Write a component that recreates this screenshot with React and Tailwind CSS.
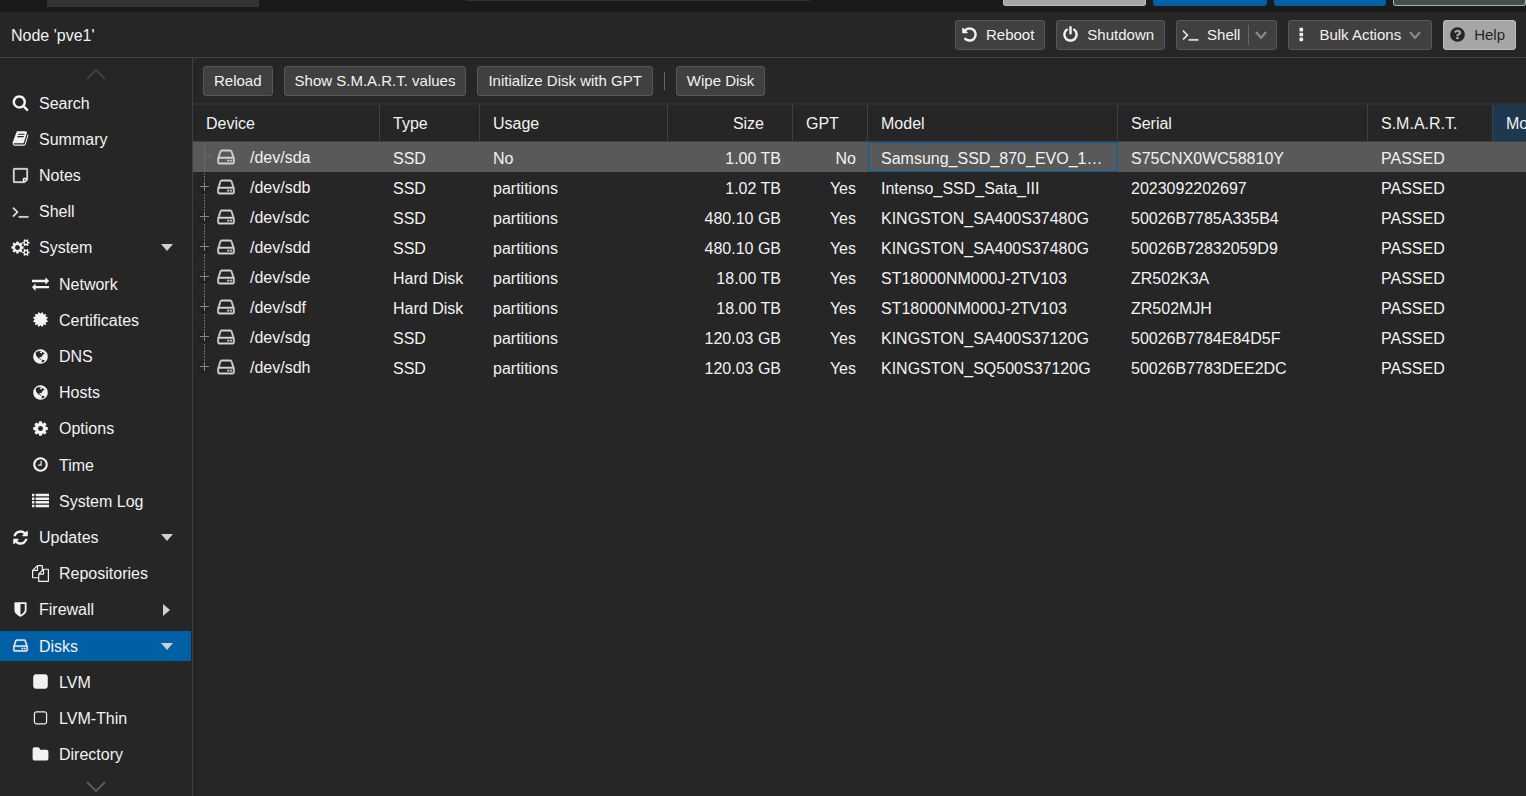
import React, { useState } from "react";

// Font glyph outlines, drawn on a 1792 unit grid
const ICONS = {
  search: "M1216 832q0-185-131.5-316.5t-316.5-131.5-316.5 131.5-131.5 316.5 131.5 316.5 316.5 131.5 316.5-131.5 131.5-316.5zm512 832q0 52-38 90t-90 38q-54 0-90-38l-343-342q-179 124-399 124-143 0-273.5-55.5t-225-150-150-225-55.5-273.5 55.5-273.5 150-225 225-150 273.5-55.5 273.5 55.5 225 150 150 225 55.5 273.5q0 220-124 399l343 343q37 37 37 90z",
  book: "M1703 478q40 57 18 129l-275 906q-19 64-76.5 107.5t-122.5 43.5h-923q-77 0-148.5-53.5t-99.5-131.5q-24-67-2-127 0-4 3-27t4-37q1-8-3-21.5t-3-19.5q2-11 8-21t16.5-23.5 16.5-23.5q23-38 45-91.5t30-91.5q3-10 .5-30t-.5-28q3-11 17-28t17-23q21-36 42-92t25-90q1-9-2.5-32t.5-28q4-13 22-30.5t22-22.5q19-26 42.5-84.5t27.5-96.5q1-8-3-25.5t-2-26.5q2-8 9-18t18-23 17-21q8-12 16.5-30.5t15-35 16-36 19.5-32 26.5-23.5 36-11.5 47.5 5.5l-1 3q38-9 51-9h761q74 0 114 56t18 130l-274 906q-36 119-71.5 153.5t-128.5 34.5h-869q-27 0-38 15-11 16-1 43 24 70 144 70h923q29 0 56-15.5t35-41.5l300-987q7-22 5-57 38 15 59 43zm-1064 2q-4 13 2 22.5t20 9.5h608q13 0 25.5-9.5t16.5-22.5l21-64q4-13-2-22.5t-20-9.5h-608q-13 0-25.5 9.5t-16.5 22.5zm-83 256q-4 13 2 22.5t20 9.5h608q13 0 25.5-9.5t16.5-22.5l21-64q4-13-2-22.5t-20-9.5h-608q-13 0-25.5 9.5t-16.5 22.5z",
  note: "M1528 1280h-248v248q29-10 41-22l185-185q12-12 22-41zm-280-128h288v-896h-1280v1280h896v-288q0-40 28-68t68-28zm416-928v1024q0 40-20 88t-48 76l-184 184q-28 28-76 48t-88 20h-1024q-40 0-68-28t-28-68v-1344q0-40 28-68t68-28h1344q40 0 68 28t28 68z",
  terminal: "M649 983l-466 466q-10 10-23 10t-23-10l-50-50q-10-10-10-23t10-23l393-393-393-393q-10-10-10-23t10-23l50-50q10-10 23-10t23 10l466 466q10 10 10 23t-10 23zm1079 457v64q0 14-9 23t-23 9h-960q-14 0-23-9t-9-23v-64q0-14 9-23t23-9h960q14 0 23 9t9 23z",
  cogs: "M832 896q0-106-75-181t-181-75-181 75-75 181 75 181 181 75 181-75 75-181zm768 512q0-52-38-90t-90-38-90 38-38 90q0 53 37.5 90.5t90.5 37.5 90.5-37.5 37.5-90.5zm0-1024q0-52-38-90t-90-38-90 38-38 90q0 53 37.5 90.5t90.5 37.5 90.5-37.5 37.5-90.5zm-384 421v185q0 10-7 19.5t-16 10.5l-155 24q-11 35-32 76 34 48 90 115 7 11 7 20 0 12-7 19-23 30-82.5 89.5t-78.5 59.5q-11 0-21-7l-115-90q-37 19-77 31-11 108-23 155-7 24-30 24h-186q-11 0-20-7.5t-10-17.5l-23-153q-34-10-75-31l-118 89q-7 7-20 7-11 0-21-8-144-133-144-160 0-9 7-19 10-14 41-53t47-61q-23-44-35-82l-152-24q-10-1-17-9.5t-7-19.5v-185q0-10 7-19.5t16-10.5l155-24q11-35 32-76-34-48-90-115-7-11-7-20 0-12 7-20 22-30 82-89t79-59q11 0 21 7l115 90q34-18 77-32 11-108 23-154 7-24 30-24h186q11 0 20 7.5t10 17.5l23 153q34 10 75 31l118-89q8-7 20-7 11 0 21 8 144 133 144 160 0 8-7 19-12 16-42 54t-45 60q23 48 34 82l152 23q10 2 17 10.5t7 19.5zm640 533v140q0 16-149 31-12 27-30 52 51 113 51 138 0 4-4 7-122 71-124 71-8 0-46-47t-52-68q-20 2-30 2t-30-2q-14 21-52 68t-46 47q-2 0-124-71-4-3-4-7 0-25 51-138-18-25-30-52-149-15-149-31v-140q0-16 149-31 13-29 30-52-51-113-51-138 0-4 4-7 4-2 35-20t59-34 30-16q8 0 46 46.5t52 67.5q20-2 30-2t30 2q51-71 92-112l6-2q4 0 124 70 4 3 4 7 0 25-51 138 17 23 30 52 149 15 149 31zm0-1024v140q0 16-149 31-12 27-30 52 51 113 51 138 0 4-4 7-122 71-124 71-8 0-46-47t-52-68q-20 2-30 2t-30-2q-14 21-52 68t-46 47q-2 0-124-71-4-3-4-7 0-25 51-138-18-25-30-52-149-15-149-31v-140q0-16 149-31 13-29 30-52-51-113-51-138 0-4 4-7 4-2 35-20t59-34 30-16q8 0 46 46.5t52 67.5q20-2 30-2t30 2q51-71 92-112l6-2q4 0 124 70 4 3 4 7 0 25-51 138 17 23 30 52 149 15 149 31z",
  exchange: "M1792 1184v192q0 13-9.5 22.5t-22.5 9.5h-1376v192q0 13-9.5 22.5t-22.5 9.5q-12 0-24-10l-319-320q-9-9-9-22 0-14 9-23l320-320q9-9 23-9 13 0 22.5 9.5t9.5 22.5v192h1376q13 0 22.5 9.5t9.5 22.5zm0-544q0 14-9 23l-320 320q-9 9-23 9-13 0-22.5-9.5t-9.5-22.5v-192h-1376q-13 0-22.5-9.5t-9.5-22.5v-192q0-13 9.5-22.5t22.5-9.5h1376v-192q0-14 9-23t23-9q12 0 24 10l319 319q9 9 9 23z",
  certificate: "M1504 896l138 135q30 28 20 70-12 41-52 51l-188 48 53 186q12 41-19 70-29 31-70 19l-186-53-48 188q-10 40-51 52-12 2-19 2-31 0-51-22l-135-138-135 138q-28 30-70 20-41-11-51-52l-48-188-186 53q-41 12-70-19-31-29-19-70l53-186-188-48q-40-10-52-51-10-42 20-70l138-135-138-135q-30-28-20-70 12-41 52-51l188-48-53-186q-12-41 19-70 29-31 70-19l186 53 48-188q10-41 51-51 41-12 70 19l135 139 135-139q29-30 70-19 41 10 51 51l48 188 186-53q41-12 70 19 31 29 19 70l-53 186 188 48q40 10 52 51 10 42-20 70z",
  globe: "M896 128q209 0 385.5 103t279.5 279.5 103 385.5-103 385.5-279.5 279.5-385.5 103-385.5-103-279.5-279.5-103-385.5 103-385.5 279.5-279.5 385.5-103zm274 521q-2 1-9.5 9.5t-13.5 9.5q2 0 4.5-5t5-11 3.5-7q6-7 22-15 14-6 52-12 34-8 51 11-2-2 9.5-13t14.5-12q3-2 15-4.5t15-7.5l2-22q-12 1-17.5-7t-6.5-21q0 2-6 8 0-7-4.5-8t-11.5 1-9 1q-10-3-15-7.5t-8-16.5-4-15q-2-5-9.5-11t-9.5-10q-1-2-2.5-5.5t-3-6.5-4-5.5-5.5-2.5-7 5-7.5 10-4.5 5q-3-2-6-1.5t-4.5 1-4.5 3-5 3.5q-3 2-8.5 3t-8.5 2q15-5-1-11-10-4-16-3 9-4 7.5-12t-8.5-14h5q-1-4-8.5-8.5t-17.5-8.5-13-6q-8-5-34-9.5t-33-.5q-5 6-4.5 10.5t4 14 3.5 12.5q1 6-5.5 13t-6.5 12q0 7 14 15.5t10 21.5q-3 8-16 16t-16 12q-5 8-1.5 18.5t10.5 16.5q2 2 1.5 4t-3.5 4.5-5.5 4-6.5 3.5l-3 2q-11 5-20.5-6t-13.5-26q-7-25-16-30-23-8-29 1-5-13-41-26-25-9-58-4 6-1 0-15-7-15-19-12 3-6 4-17.5t1-13.5q3-13 12-23 1-1 7-8.5t9.5-13.5.5-6q35 4 50-11 5-5 11.5-17t10.5-17q9-6 14-5.5t14.5 5.5 14.5 5q14 1 15.5-11t-7.5-20q12 1 3-17-4-7-8-9-12-4-27 5-8 4 2 8-1-1-9.5 10.5t-16.5 17.5-16-5q-1-1-5.5-13.5t-9.5-13.5q-8 0-16 15 3-8-11-15t-24-8q19-12-8-27-7-4-20.5-5t-19.5 4q-5 7-5.5 11.5t5 8 10.5 5.5 11.5 4 8.5 3q14 10 8 14-2 1-8.5 3.5t-11.5 4.5-6 4q-3 4 0 14t-2 14q-5-5-9-17.5t-7-16.5q7 9-25 6l-10-1q-4 0-16 2t-20.5 1-13.5-8q-4-8 0-20 1-4 4-2-4-3-11-9.5t-10-8.5q-46 15-94 41 6 1 12-1 5-2 13-6.5t10-5.5q34-14 42-7l5-5q14 16 20 25-7-4-30-1-20 6-22 12 7 12 5 18-4-3-11.5-10t-14.5-11-15-5q-16 0-22 1-146 80-235 222 7 7 12 8 4 1 5 9t2.5 11 11.5-3q9 8 3 19 1-1 44 27 19 17 21 21 3 11-10 18-1-2-9-9t-9-4q-3 5 .5 18.5t10.5 12.5q-7 0-9.5 16t-2.5 35.5-1 23.5l2 1q-3 12 5.5 34.5t21.5 19.5q-13 3 20 43 6 8 8 9 3 2 12 7.5t15 10 10 10.5q4 5 10 22.5t14 23.5q-2 6 9.5 20t10.5 23q-1 0-2.5 1t-2.5 1q3 7 15.5 14t15.5 13q1 3 2 10t3 11 8 2q2-20-24-62-15-25-17-29-3-5-5.5-15.5t-4.5-14.5q2 0 6 1.5t8.5 3.5 7.5 4 2 3q-3 7 2 17.5t12 18.5 17 19 12 13q6 6 14 19.5t0 13.5q9 0 20 10.5t17 19.5q5 8 8 26t5 24q2 7 8.5 13.5t12.5 9.5l16 8 13 7q5 2 18.5 10.5t21.5 11.5q10 4 16 4t14.5-2.5 13.5-3.5q15-2 29 15t21 21q36 19 55 11-2 1 .5 7.5t8 15.5 9 14.5 5.5 8.5q5 6 18 15t18 15q6-4 7-9-3 8 7 20t18 10q14-3 14-32-31 15-49-18 0-1-2.5-5.5t-4-8.5-2.5-8.5 0-7.5 5-3q9 0 10-3.5t-2-12.5-4-13q-1-8-11-20t-12-15q-5 9-16 8t-16-9q0 1-1.5 5.5t-1.5 6.5q-13 0-15-1 1-3 2.5-17.5t3.5-22.5q1-4 5.5-12t7.5-14.5 4-12.5-4.5-9.5-17.5-2.5q-19 1-26 20-1 3-3 10.5t-5 11.5-9 7q-7 3-24 2t-24-5q-13-8-22.5-29t-9.5-37q0-10 2.5-26.5t3-25-5.5-24.5q3-2 9-9.5t10-10.5q2-1 4.5-1.5t4.5 0 4-1.5 3-6q-1-1-4-3-3-3-4-3 7 3 28.5-1.5t27.5 1.5q15 11 22-2 0-1-2.5-9.5t-.5-13.5q5 27 29 9 3 3 15.5 5t17.5 5q3 2 7 5.5t5.5 4.5 5-.5 8.5-6.5q10 14 12 24 11 40 19 44 7 3 11 2t4.5-9.5 0-14-1.5-12.5l-1-8v-18l-1-8q-15-3-18.5-12t1.5-18.5 15-18.5q1-1 8-3.5t15.5-6.5 12.5-8q21-19 15-35 7 0 11-9-1 0-5-3t-7.5-5-4.5-2q9-5 2-16 5-3 7.5-11t7.5-10q9 12 21 2 8-8 1-16 5-7 20.5-10.5t18.5-9.5q7 2 8-2t1-12 3-12q4-5 15-9t13-5l17-11q3-4 0-4 18 2 31-11 10-11-6-20 3-6-3-9.5t-15-5.5q3-1 11.5-.5t10.5-1.5q15-10-7-16-17-5-43 12zm-163 877q206-36 351-189-3-3-12.5-4.5t-12.5-3.5q-18-7-24-8 1-7-2.5-13t-8-9-12.5-8-11-7q-2-2-7-6t-7-5.5-7.5-4.5-8.5-2-10 1l-3 1q-3 1-5.5 2.5t-5.5 3-4 3 0 2.5q-21-17-36-22-5-1-11-5.5t-10.5-7-10-1.5-11.5 7q-5 5-6 15t-2 13q-7-5 0-17.5t2-18.5q-3-6-10.5-4.5t-12 4.5-11.5 8.5-9 6.5-8.5 5.5-8.5 7.5q-3 4-6 12t-5 11q-2-4-11.5-6.5t-9.5-5.5q2 10 4 35t5 38q7 31-12 48-27 25-29 40-4 22 12 26 0 7-8 20.5t-7 21.5q0 6 2 16z",
  cog: "M1152 896q0-106-75-181t-181-75-181 75-75 181 75 181 181 75 181-75 75-181zm512-109v222q0 12-8 23t-20 13l-185 28q-19 54-39 91 35 50 107 138 10 12 10 25t-9 23q-27 37-99 108t-94 71q-12 0-26-9l-138-108q-44 23-91 38-16 136-29 186-7 28-36 28h-222q-14 0-24.5-8.5t-11.5-21.5l-28-184q-49-16-90-37l-141 107q-10 9-25 9-14 0-25-11-126-114-165-168-7-10-7-23 0-12 8-23 15-21 51-66.5t54-70.5q-27-50-41-99l-183-27q-13-2-21-12.5t-8-23.5v-222q0-12 8-23t19-13l186-28q14-46 39-92-40-57-107-138-10-12-10-24 0-10 9-23 26-36 98.5-107.5t94.5-71.5q13 0 26 10l138 107q44-23 91-38 16-136 29-186 7-28 36-28h222q14 0 24.5 8.5t11.5 21.5l28 184q49 16 90 37l142-107q9-9 24-9 13 0 25 10 129 119 165 170 7 8 7 22 0 12-8 23-15 21-51 66.5t-54 70.5q26 50 41 98l183 28q13 2 21 12.5t8 23.5z",
  clock: "M1024 544v448q0 14-9 23t-23 9h-320q-14 0-23-9t-9-23v-64q0-14 9-23t23-9h224v-352q0-14 9-23t23-9h64q14 0 23 9t9 23zm416 352q0-148-73-273t-198-198-273-73-273 73-198 198-73 273 73 273 198 198 273 73 273-73 198-198 73-273zm224 0q0 209-103 385.5t-279.5 279.5-385.5 103-385.5-103-279.5-279.5-103-385.5 103-385.5 279.5-279.5 385.5-103 385.5 103 279.5 279.5 103 385.5z",
  list: "M0 1344h256v256h-256zM0 960h256v256h-256zM0 576h256v256h-256zM0 192h256v256h-256zM384 1344h1408v256h-1408zM384 960h1408v256h-1408zM384 576h1408v256h-1408zM384 192h1408v256h-1408z",
  refresh: "M1639 1056q0 5-1 7-64 268-268 434.5t-478 166.5q-146 0-282.5-55t-243.5-157l-129 129q-19 19-45 19t-45-19-19-45v-448q0-26 19-45t45-19h448q26 0 45 19t19 45-19 45l-137 137q71 66 161 102t187 36q134 0 250-65t186-179q11-17 53-117 8-23 30-23h192q13 0 22.5 9.5t9.5 22.5zm25-800v448q0 26-19 45t-45 19h-448q-26 0-45-19t-19-45 19-45l138-138q-148-137-349-137-134 0-250 65t-186 179q-11 17-53 117-8 23-30 23h-199q-13 0-22.5-9.5t-9.5-22.5v-7q65-268 270-434.5t480-166.5q146 0 284 55.5t245 156.5l130-129q19-19 45-19t45 19 19 45z",
  files: "M1696 384q40 0 68 28t28 68v1216q0 40-28 68t-68 28h-960q-40 0-68-28t-28-68v-288h-544q-40 0-68-28t-28-68v-672q0-40 20-88t48-76l408-408q28-28 76-48t88-20h416q40 0 68 28t28 68v328q68-40 128-40h416zm-544 213l-299 299h299v-299zm-640-384l-299 299h299v-299zm196 647l316-316v-416h-384v416q0 40-28 68t-68 28h-416v640h512v-256q0-40 20-88t48-76zm956 804v-1152h-384v416q0 40-28 68t-68 28h-416v640h896z",
  shield: "M1344 960v-640h-448v1137q119-63 213-137 235-184 235-360zm192-768v768q0 86-33.5 170.5t-83 150-118 127.5-126.5 103-121 77.5-89.5 49.5-42.5 20q-12 6-26 6t-26-6q-16-7-42.5-20t-89.5-49.5-121-77.5-126.5-103-118-127.5-83-150-33.5-170.5v-768q0-26 19-45t45-19h1152q26 0 45 19t19 45z",
  hdd: "M1168 1216q0 33-23.5 56.5t-56.5 23.5-56.5-23.5-23.5-56.5 23.5-56.5 56.5-23.5 56.5 23.5 23.5 56.5zm256 0q0 33-23.5 56.5t-56.5 23.5-56.5-23.5-23.5-56.5 23.5-56.5 56.5-23.5 56.5 23.5 23.5 56.5zm112 160v-320q0-13-9.5-22.5t-22.5-9.5h-1216q-13 0-22.5 9.5t-9.5 22.5v320q0 13 9.5 22.5t22.5 9.5h1216q13 0 22.5-9.5t9.5-22.5zm-1230-480h1180l-157-482q-4-13-16-21.5t-26-8.5h-782q-14 0-26 8.5t-16 21.5zm1358 160v320q0 66-47 113t-113 47h-1216q-66 0-113-47t-47-113v-320q0-25 16-75l197-606q17-53 63-86t101-33h782q55 0 101 33t63 86l197 606q16 50 16 75z",
  square: "M1664 416v960q0 119-84.5 203.5t-203.5 84.5h-960q-119 0-203.5-84.5t-84.5-203.5v-960q0-119 84.5-203.5t203.5-84.5h960q119 0 203.5 84.5t84.5 203.5z",
  squareO: "M1312 256h-832q-66 0-113 47t-47 113v832q0 66 47 113t113 47h832q66 0 113-47t47-113v-832q0-66-47-113t-113-47zm288 160v832q0 119-84.5 203.5t-203.5 84.5h-832q-119 0-203.5-84.5t-84.5-203.5v-832q0-119 84.5-203.5t203.5-84.5h832q119 0 203.5 84.5t84.5 203.5z",
  folder: "M1728 608v704q0 92-66 158t-158 66h-1216q-92 0-158-66t-66-158v-960q0-92 66-158t158-66h320q92 0 158 66t66 158v32h672q92 0 158 66t66 158z",
  undo: "M1664 896q0 156-61 298t-164 245-245 164-298 61q-172 0-327-72.5t-264-204.5q-7-10-6.5-22.5t8.5-20.5l137-138q10-9 25-9 16 2 23 12 73 95 179 147t225 52q104 0 198.5-40.5t163.5-109.5 109.5-163.5 40.5-198.5-40.5-198.5-109.5-163.5-163.5-109.5-198.5-40.5q-98 0-188 35.5t-160 101.5l137 138q31 30 14 69-17 40-59 40h-448q-26 0-45-19t-19-45v-448q0-42 40-59 39-17 69 14l130 129q107-101 244.5-156.5t284.5-55.5q156 0 298 61t245 164 164 245 61 298z",
  power: "M1664 896q0 156-61 298t-164 245-245 164-298 61-298-61-245-164-164-245-61-298q0-182 80.5-343t226.5-270q43-32 95.5-25t83.5 50q32 42 24.5 94.5t-49.5 84.5q-98 74-151.5 181t-53.5 228q0 104 40.5 198.5t109.5 163.5 163.5 109.5 198.5 40.5 198.5-40.5 163.5-109.5 109.5-163.5 40.5-198.5q0-121-53.5-228t-151.5-181q-42-32-49.5-84.5t24.5-94.5q31-43 84-50t95 25q146 109 226.5 270t80.5 343zm-640-768v640q0 52-38 90t-90 38-90-38-38-90v-640q0-52 38-90t90-38 90 38 38 90z",
  dots: "M672 1216h192q96 0 96 96v192q0 96-96 96h-192q-96 0-96-96v-192q0-96 96-96zM672 704h192q96 0 96 96v192q0 96-96 96h-192q-96 0-96-96v-192q0-96 96-96zM672 192h192q96 0 96 96v192q0 96-96 96h-192q-96 0-96-96v-192q0-96 96-96z",
  help: "M1024 1376v-192q0-14-9-23t-23-9h-192q-14 0-23 9t-9 23v192q0 14 9 23t23 9h192q14 0 23-9t9-23zm256-672q0-88-55.5-163t-138.5-116-170-41q-243 0-371 213-15 24 8 42l132 100q7 6 19 6 16 0 25-12 53-68 86-92 34-24 86-24 48 0 85.5 26t37.5 59q0 38-20 61t-68 45q-63 28-115.5 86.5t-52.5 125.5v36q0 14 9 23t23 9h192q14 0 23-9t9-23q0-19 21.5-49.5t54.5-49.5q32-18 49-28.5t46-35 44.5-48 28-60.5 12.5-81zm384 192q0 209-103 385.5t-279.5 279.5-385.5 103-385.5-103-279.5-279.5-103-385.5 103-385.5 279.5-279.5 385.5-103 385.5 103 279.5 279.5 103 385.5z",
};

const MENU = [
  { label: "Search", icon: "search" },
  { label: "Summary", icon: "book" },
  { label: "Notes", icon: "note" },
  { label: "Shell", icon: "terminal" },
  { label: "System", icon: "cogs", arrow: "down" },
  { label: "Network", icon: "exchange", child: true },
  { label: "Certificates", icon: "certificate", child: true },
  { label: "DNS", icon: "globe", child: true },
  { label: "Hosts", icon: "globe", child: true },
  { label: "Options", icon: "cog", child: true },
  { label: "Time", icon: "clock", child: true },
  { label: "System Log", icon: "list", child: true },
  { label: "Updates", icon: "refresh", arrow: "down" },
  { label: "Repositories", icon: "files", child: true },
  { label: "Firewall", icon: "shield", arrow: "right" },
  { label: "Disks", icon: "hdd", arrow: "down" },
  { label: "LVM", icon: "square", child: true },
  { label: "LVM-Thin", icon: "squareO", child: true },
  { label: "Directory", icon: "folder", child: true },
];

const DISKS = [
  { dev: "/dev/sda", type: "SSD", usage: "No", size: "1.00 TB", gpt: "No", model: "Samsung_SSD_870_EVO_1TB", serial: "S75CNX0WC58810Y", smart: "PASSED" },
  { dev: "/dev/sdb", type: "SSD", usage: "partitions", size: "1.02 TB", gpt: "Yes", model: "Intenso_SSD_Sata_III", serial: "2023092202697", smart: "PASSED" },
  { dev: "/dev/sdc", type: "SSD", usage: "partitions", size: "480.10 GB", gpt: "Yes", model: "KINGSTON_SA400S37480G", serial: "50026B7785A335B4", smart: "PASSED" },
  { dev: "/dev/sdd", type: "SSD", usage: "partitions", size: "480.10 GB", gpt: "Yes", model: "KINGSTON_SA400S37480G", serial: "50026B72832059D9", smart: "PASSED" },
  { dev: "/dev/sde", type: "Hard Disk", usage: "partitions", size: "18.00 TB", gpt: "Yes", model: "ST18000NM000J-2TV103", serial: "ZR502K3A", smart: "PASSED" },
  { dev: "/dev/sdf", type: "Hard Disk", usage: "partitions", size: "18.00 TB", gpt: "Yes", model: "ST18000NM000J-2TV103", serial: "ZR502MJH", smart: "PASSED" },
  { dev: "/dev/sdg", type: "SSD", usage: "partitions", size: "120.03 GB", gpt: "Yes", model: "KINGSTON_SA400S37120G", serial: "50026B7784E84D5F", smart: "PASSED" },
  { dev: "/dev/sdh", type: "SSD", usage: "partitions", size: "120.03 GB", gpt: "Yes", model: "KINGSTON_SQ500S37120G", serial: "50026B7783DEE2DC", smart: "PASSED" },
];

function Icon({ name, className = "size-[17px]" }) {
  // thin outlines get a little extra weight
  const thin = name === "hdd" || name === "terminal" || name === "note";
  return (
    <svg
      viewBox="0 0 1792 1792"
      fill="currentColor"
      stroke={thin ? "currentColor" : "none"}
      strokeWidth="40"
      className={`shrink-0 overflow-visible ${className}`}
      aria-hidden="true"
    >
      <path d={ICONS[name]} />
    </svg>
  );
}

function Chevron({ up, className }) {
  return (
    <svg viewBox="0 0 20 12" fill="none" stroke="currentColor" strokeWidth="2" className={className} aria-hidden="true">
      <path d={up ? "M1 11L10 2L19 11" : "M1 1L10 10L19 1"} />
    </svg>
  );
}

// Small arrow of the menu buttons
function ButtonArrow() {
  return (
    <svg viewBox="0 0 12 8" fill="none" stroke="#8c8c8c" strokeWidth="2" className="h-2 w-3" aria-hidden="true">
      <path d="M1 1L6 7L11 1" />
    </svg>
  );
}

function Button({ children, className = "px-[10px]" }) {
  return (
    <button className={`flex h-[30px] items-center rounded-[3px] border border-[#585858] bg-[#404040] text-[15px] whitespace-nowrap hover:bg-[#4a4a4a] ${className}`}>
      {children}
    </button>
  );
}

// Dotted tree line with the expander in front of every disk
function TreeLine({ leaf, last }) {
  return (
    <svg viewBox="0 0 14 30" className="h-[30px] w-[14px] shrink-0" fill="none" aria-hidden="true">
      <path d={last ? "M7.5 1V20" : "M7.5 1V30"} stroke="#6c6c6c" strokeDasharray="2 1" />
      {leaf ? (
        <path d="M9 14.5H14" stroke="#7c7c7c" strokeDasharray="1 1" />
      ) : (
        <>
          <rect x="2" y="9" width="11" height="12" fill="#222" />
          <path d="M3 14.5H12M7.5 10V19" stroke="#858585" />
        </>
      )}
    </svg>
  );
}

function Sidebar() {
  const [active, setActive] = useState("Disks");

  return (
    <nav className="flex w-[193px] shrink-0 flex-col border-r border-[#404040]">
      <div className="flex h-[27px] items-center justify-center pt-1 text-[#404040]">
        <Chevron up className="h-3 w-5" />
      </div>
      <ul className="flex flex-1 flex-col">
        {MENU.map((item) => (
          <li key={item.label} className="flex flex-1 items-center">
            <button
              onClick={() => setActive(item.label)}
              className={`mr-px flex h-[30px] flex-1 items-center gap-[10px] pr-[18px] text-left ${item.child ? "pl-8" : "pl-3"} ${active === item.label ? "bg-[#0060a5]" : ""}`}
            >
              <Icon name={item.icon} className="mb-px size-[17px]" />
              <span className="flex-1 pt-px">{item.label}</span>
              {item.arrow === "down" && (
                <svg viewBox="0 0 12 7" className="h-[7px] w-3" fill="#d0d0d0" aria-hidden="true"><path d="M0 0H12L6 7Z" /></svg>
              )}
              {item.arrow === "right" && (
                <svg viewBox="0 0 12 12" className="size-3" fill="#d0d0d0" aria-hidden="true"><path d="M2 0V12L9 6Z" /></svg>
              )}
            </button>
          </li>
        ))}
      </ul>
      <div className="flex h-[23px] items-center justify-center pt-1 text-[#5a5a5a]">
        <Chevron className="h-3 w-5" />
      </div>
    </nav>
  );
}

function DiskTable() {
  const th = "border-r border-[#404040] pt-px pr-3 pl-[13px] font-normal";
  const cell = "pt-[3px] pr-3 pl-[13px]";

  return (
    <div className="overflow-hidden border-t-2 border-[#303030]">
      <table className="w-[1425px] table-fixed border-separate border-spacing-0 text-left">
        <colgroup>
          <col className="w-[187px]" />
          <col className="w-[100px]" />
          <col className="w-[188px]" />
          <col className="w-[125px]" />
          <col className="w-[75px]" />
          <col className="w-[250px]" />
          <col className="w-[250px]" />
          <col className="w-[125px]" />
          <col className="w-[125px]" />
        </colgroup>
        <thead>
          <tr className="h-[37px] *:border-b">
            <th className={th}>Device</th>
            <th className={th}>Type</th>
            <th className={th}>Usage</th>
            <th className="border-r border-[#404040] pt-px pr-7 text-right font-normal">Size</th>
            <th className={th}>GPT</th>
            <th className={th}>Model</th>
            <th className={th}>Serial</th>
            <th className={th}>S.M.A.R.T.</th>
            <th className={`${th} bg-[#1d384f]`}>Mounted</th>
          </tr>
        </thead>
        <tbody>
          {DISKS.map((disk, i) => (
            <tr key={disk.dev} className={`h-[30px] *:p-0 ${i === 0 ? "bg-[#595959]" : ""}`}>
              <td>
                <div className="flex items-center pl-1">
                  <TreeLine leaf={i === 0} last={i === DISKS.length - 1} />
                  <Icon name="hdd" className="ml-[5px] size-5 text-[#d4d4d4]" />
                  <span className="ml-[14px] pt-px">{disk.dev}</span>
                </div>
              </td>
              <td><div className={cell}>{disk.type}</div></td>
              <td><div className={cell}>{disk.usage}</div></td>
              <td><div className={`${cell} text-right`}>{disk.size}</div></td>
              <td><div className={`${cell} text-right`}>{disk.gpt}</div></td>
              <td>
                <div className={`h-[30px] truncate border px-3 pt-1 leading-6 ${i === 0 ? "border-[#0060a5]" : "border-transparent"}`}>{disk.model}</div>
              </td>
              <td><div className={cell}>{disk.serial}</div></td>
              <td><div className={cell}>{disk.smart}</div></td>
              <td></td>
            </tr>
          ))}
        </tbody>
      </table>
    </div>
  );
}

export default function App() {
  return (
    <div className="flex min-h-screen flex-col overflow-hidden bg-[#262626] font-['Liberation_Sans',Arial,sans-serif] text-base leading-5 text-[#f2f2f2]">
      {/* Lower edge of the main toolbar */}
      <div className="flex h-3 items-start bg-[#1a1a1a]">
        <div className="ml-[47px] h-[7px] w-[212px] bg-[#333]" />
        <div className="ml-[207px] h-px w-[344px] bg-[#333]" />
        <div className="flex-1" />
        <div className="flex gap-[7px]">
          <div className="h-1.5 w-[143px] rounded-b-[3px] border border-t-0 border-[#bdbdbd] bg-[#a6a6a6]" />
          <div className="h-1.5 w-[114px] rounded-b-[3px] bg-[#0060a5]" />
          <div className="h-1.5 w-[112px] rounded-b-[3px] bg-[#0060a5]" />
          <div className="h-1.5 w-[133px] rounded-b-[3px] border border-t-0 border-[#a5b5b1] bg-[#464d4c]" />
        </div>
      </div>

      <header className="flex h-[46px] items-center gap-[11px] border-b border-[#404040] pr-[10px] pl-[11px]">
        <h1 className="flex-1 pt-0.5">Node 'pve1'</h1>
        <Button className="gap-2 pr-[10px] pl-[5px]"><Icon name="undo" />Reboot</Button>
        <Button className="gap-2 pr-[10px] pl-[5px]"><Icon name="power" />Shutdown</Button>
        <Button className="gap-2 pr-[9px] pl-[5px]">
          <Icon name="terminal" />Shell
          <span className="flex h-5 items-center border-l border-[#666] pl-1.5"><ButtonArrow /></span>
        </Button>
        <Button className="gap-2 pr-[10px] pl-[5px]">
          <Icon name="dots" />Bulk Actions<ButtonArrow />
        </Button>
        <button className="flex h-[30px] items-center gap-2 rounded-[3px] border border-[#bdbdbd] bg-[#a6a6a6] pr-[10px] pl-[5px] text-[15px] text-[#262626]">
          <Icon name="help" />Help
        </button>
      </header>

      <div className="flex flex-1">
        <Sidebar />
        <main className="min-w-0 flex-1">
          <div className="flex h-[45px] items-center gap-[11px] px-[10px] pt-px">
            <Button>Reload</Button>
            <Button>Show S.M.A.R.T. values</Button>
            <Button>Initialize Disk with GPT</Button>
            <span className="h-[18px] w-px bg-[#666]" />
            <Button>Wipe Disk</Button>
          </div>
          <DiskTable />
        </main>
      </div>
    </div>
  );
}
